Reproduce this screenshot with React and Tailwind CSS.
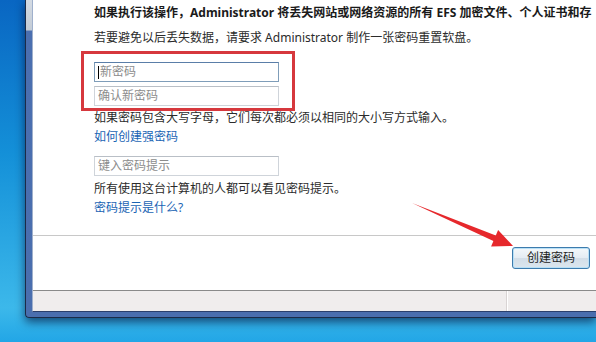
import React from 'react';

const font = "font-['Noto_Sans','Noto_Sans_CJK_SC',sans-serif]";

const TextBox = ({ placeholder, focused }) => (
  <div
    className={`w-[185px] h-[20px] flex items-center pl-[3px] text-[12px] text-[#8c8c8c] bg-white border ${
      focused ? 'border-[#7f9db9] border-t-[#5a7ea8]' : 'border-[#cfd4da] border-t-[#b9bfc6]'
    }`}
  >
    {focused && <span className="w-px h-[13px] bg-black mr-px" />}
    {placeholder}
  </div>
);

// red annotation arrow pointing at the button
const Arrow = () => (
  <svg className="absolute left-[408px] top-[198px]" width="110" height="56" viewBox="0 0 110 56">
    <path d="M4 5 L87.8 37.4 L90.1 31.9 L105 48 L83.1 48.5 L85.4 43 Z" fill="#e6282c" />
  </svg>
);

export default function App() {
  return (
    <div className={`relative w-[596px] h-[342px] overflow-hidden bg-[linear-gradient(180deg,#0966c2_0%,#1490d8_45%,#3cb8ea_90%,#22a6e6_100%)] ${font}`}>
      {/* window */}
      <div className="ml-[25px] w-[571px] h-[318px] flex flex-col border-l border-b border-[#1b2b47] rounded-bl-[4px] bg-[linear-gradient(180deg,#d4dbe3_0px,#c3ccd6_30px,#4b6fb0_31px,#4a6eae_100%)] pl-[6px] pb-[5px] shadow-[0_4px_10px_rgba(0,0,40,0.6)]">
        <div className="flex-1 flex flex-col bg-white border-l border-[#9fb0cc] border-b border-b-[#2a3f6c]">
          {/* body */}
          <div className="pl-[61px] pt-[4px] h-[235px] text-[12px] leading-[18px] text-[#2b2b2b] whitespace-nowrap">
            <p className="font-bold text-[#1a1a1a]">
              如果执行该操作，Administrator 将丢失网站或网络资源的所有 EFS 加密文件、个人证书和存
            </p>
            <p className="mt-[7px]">若要避免以后丢失数据，请要求 Administrator 制作一张密码重置软盘。</p>
            <div className="mt-[15px] flex flex-col gap-[4px]">
              <TextBox placeholder="新密码" focused />
              <TextBox placeholder="确认新密码" />
            </div>
            <p className="mt-[2px] leading-[19px]">如果密码包含大写字母，它们每次都必须以相同的大小写方式输入。</p>
            <p className="leading-[19px] text-[#1a64b4]">如何创建强密码</p>
            <div className="mt-[10px]">
              <TextBox placeholder="键入密码提示" />
            </div>
            <p className="mt-[3px] leading-[19px]">所有使用这台计算机的人都可以看见密码提示。</p>
            <p className="leading-[19px] text-[#1a64b4]">密码提示是什么?</p>
          </div>
          {/* button row */}
          <div className="h-[55px] border-t border-[#c8c8c8] flex justify-end items-start pt-[11px] pr-[6px]">
            <button className="w-[78px] h-[22px] rounded-[3px] border border-[#3d7bad] bg-[linear-gradient(180deg,#f4f8fb_0%,#e4ecf3_50%,#d3dee8_51%,#dce6ee_100%)] shadow-[inset_0_0_0_1px_#b8e0f6] text-[12px] text-[#1e1e1e]">
              创建密码
            </button>
          </div>
          {/* status strip */}
          <div className="flex-1 flex border-t border-[#8a8a8a] bg-[#f0eded]">
            <div className="w-[474px] border-r border-[#d9d4d4]" />
            <div className="flex-1 border-l border-white" />
          </div>
        </div>
      </div>

      {/* annotations */}
      <div className="absolute left-[81px] top-[51px] w-[214px] h-[60px] border-[3px] border-[#d6383d]" />
      <Arrow />
    </div>
  );
}
